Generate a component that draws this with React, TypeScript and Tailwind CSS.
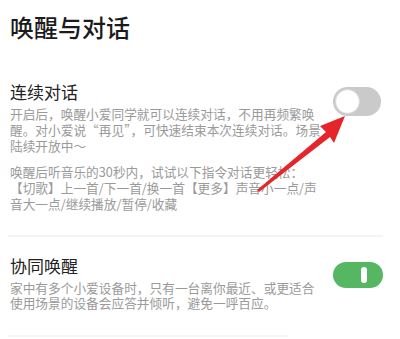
export default function App() {
  const font = { fontFamily: '"Noto Sans CJK SC", "Noto Sans", sans-serif' };

  return (
    <div
      className="relative w-[400px] h-[339px] overflow-hidden bg-white px-[10px] pt-[11px] text-[#222]"
      style={font}
    >
      <h1 className="text-[24px] leading-[32px] font-medium text-[#1b1b1b]">唤醒与对话</h1>

      {/* 连续对话 */}
      <div className="mt-[38px] flex items-start justify-between pr-[9px]">
        <div>
          <div className="text-[17px] leading-[22px] text-[#222]">连续对话</div>
          <div className="mt-[3px] text-[12.7px] leading-[16px] text-[#9a9a9a]">
            <div>开启后，唤醒小爱同学就可以连续对话，不用再频繁唤</div>
            <div>醒。对小爱说“再见”，可快速结束本次连续对话。场景</div>
            <div>陆续开放中～</div>
          </div>
          <div className="mt-[10px] text-[12.7px] leading-[16px] text-[#9a9a9a]">
            <div>唤醒后听音乐的30秒内，试试以下指令对话更轻松：</div>
            <div>【切歌】上一首/下一首/换一首【更多】声音小一点/声</div>
            <div>音大一点/继续播放/暂停/收藏</div>
          </div>
        </div>
        <div className="mt-[6px] flex h-[29px] w-[48px] shrink-0 items-center rounded-full bg-[#cacaca] pl-[2px]">
          <div className="h-[25px] w-[25px] rounded-full border border-[#d6d6d6] bg-white" />
        </div>
      </div>

      <div className="mt-[23px] -mx-[2px] h-[2px] w-[375px] bg-[#f4f4f4]" />

      {/* 协同唤醒 */}
      <div className="mt-[18px] flex items-start justify-between pr-[7px]">
        <div>
          <div className="text-[17px] leading-[22px] text-[#222]">协同唤醒</div>
          <div className="mt-[3px] text-[12.7px] leading-[15px] text-[#9a9a9a]">
            <div>家中有多个小爱设备时，只有一台离你最近、或更适合</div>
            <div>使用场景的设备会应答并倾听，避免一呼百应。</div>
          </div>
        </div>
        <div className="mt-[7px] flex h-[26px] w-[50px] shrink-0 items-center justify-end rounded-full bg-[#56b763] pr-[16px]">
          <div className="h-[16px] w-[6px] rounded-full bg-white" />
        </div>
      </div>

      <div className="mt-[25px] -mx-[2px] h-[2px] w-[280px] bg-[#f4f4f4]" />

      {/* red arrow annotation */}
      <svg className="absolute left-0 top-0" width="400" height="339" viewBox="0 0 400 339">
        <polygon
          points="345,116 320,126 326,132 257,190 259,192 330,137 334,143"
          fill="#e5252a"
        />
      </svg>
    </div>
  );
}
